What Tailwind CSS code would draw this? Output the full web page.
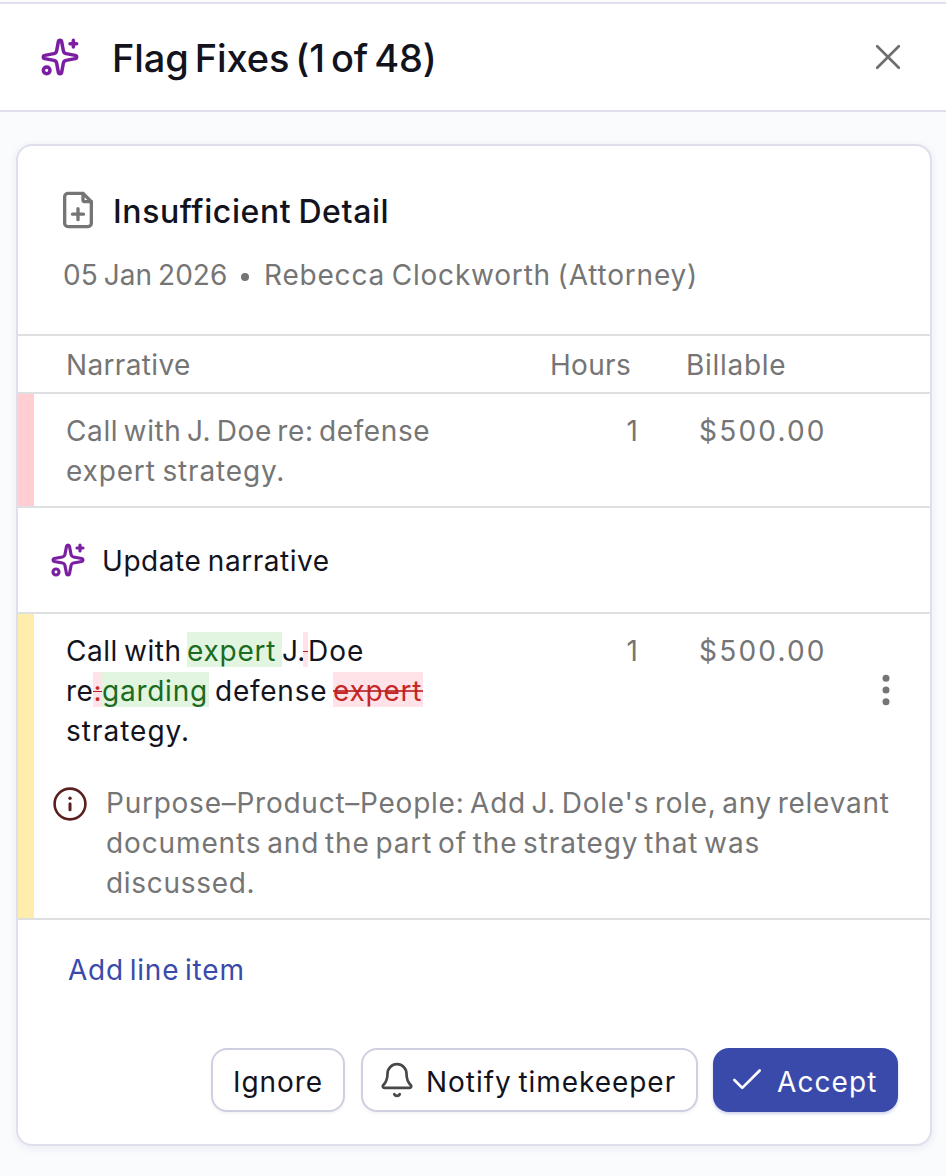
<!DOCTYPE html>
<html lang="en">
<head>
<meta charset="utf-8">
<title>Flag Fixes</title>
<script src="https://cdn.jsdelivr.net/npm/@tailwindcss/browser@4"></script>
</head>
<body class="w-[946px] h-[1176px] overflow-hidden bg-[#fafbfd] font-['Inter',sans-serif] text-[28px] leading-[40px] text-[#12131d]">
<svg class="hidden">
  <symbol id="sparkles" viewBox="0 0 24 24" fill="none" stroke="currentColor" stroke-width="2.1" stroke-linecap="round" stroke-linejoin="round">
    <path d="M11.017 2.814a1 1 0 0 1 1.966 0l1.051 5.558a2 2 0 0 0 1.594 1.594l5.558 1.051a1 1 0 0 1 0 1.966l-5.558 1.051a2 2 0 0 0-1.594 1.594l-1.051 5.558a1 1 0 0 1-1.966 0l-1.051-5.558a2 2 0 0 0-1.594-1.594l-5.558-1.051a1 1 0 0 1 0-1.966l5.558-1.051a2 2 0 0 0 1.594-1.594z"/>
    <path d="M20 2v4M22 4h-4"/><circle cx="4" cy="20" r="2"/>
  </symbol>
</svg>
<div class="flex h-full flex-col">
  <header class="mt-[2px] flex h-[110px] shrink-0 items-center border-y-2 border-[#dfdfee] bg-white pr-[45px] pl-[40px]">
    <svg class="size-[40px] text-[#7b1fa2]"><use href="#sparkles"/></svg>
    <h1 class="mt-[2px] ml-[32px] text-[38px] font-medium whitespace-nowrap tracking-[-0.1px] [word-spacing:-4px]">Flag Fixes (1 of 48)</h1>
    <svg class="ml-auto size-[26px] text-[#6e6e6e]" viewBox="0 0 26 26" fill="none" stroke="currentColor" stroke-width="2.7" stroke-linecap="round"><path d="M2.2 2.2l21.6 21.6M23.8 2.2L2.2 23.8"/></svg>
  </header>

  <main class="mt-[32px] ml-[16px] h-[1002px] w-[916px] shrink-0 overflow-hidden rounded-[16px] border-2 border-[#dfdfec] bg-white shadow-[0_2px_6px_2px_rgba(40,40,80,0.05)]">
    <section class="h-[188px] pt-[44px] pl-[45px]">
      <div class="flex items-center">
        <svg class="-mt-[2px] -ml-[5px] size-[40px] text-[#757575]" viewBox="0 0 24 24" fill="none" stroke="currentColor" stroke-width="2" stroke-linecap="round" stroke-linejoin="round">
          <path d="M6 22a2 2 0 0 1-2-2V4a2 2 0 0 1 2-2h9l5 5v13a2 2 0 0 1-2 2z"/><path d="M15 2v4a1 1 0 0 0 1 1h4M8.7 14.5h6.6M12 17.8v-6.6"/>
        </svg>
        <h2 class="mt-[2px] ml-[15px] text-[32px] font-medium whitespace-nowrap tracking-[0.6px] [word-spacing:-2px]">Insufficient Detail</h2>
      </div>
      <div class="mt-[23px] flex items-center whitespace-nowrap text-[#757575]">
        <span class="w-[178px] tracking-[0.05px] [word-spacing:-2px]">05 Jan 2026</span>
        <span class="mt-[3px] size-[8px] rounded-full bg-[#757575]"></span>
        <span class="ml-[15px] tracking-[0.8px] [word-spacing:-2px]">Rebecca Clockworth (Attorney)</span>
      </div>
    </section>

    <div class="flex h-[60px] items-center border-y-2 border-[#dedfe1] pt-[2px] pl-[48px] text-[#757575]">
      <span class="w-[484px] tracking-[0.35px]">Narrative</span>
      <span class="w-[136px] tracking-[0.3px]">Hours</span>
      <span class="tracking-[0.7px]">Billable</span>
    </div>

    <div class="flex h-[112px] border-l-[16px] border-[#ffcdd2] pt-[17px] pl-[32px] whitespace-nowrap text-[#757575]">
      <div class="w-[484px]"><span class="tracking-[0.6px] [word-spacing:-3px]">Call with J. Doe re: defense</span><br><span class="tracking-[0.85px] [word-spacing:-2px]">expert strategy.</span></div>
      <div class="w-[88px] text-right">1</div>
      <div class="ml-[61px] tracking-[2.2px]">$500.00</div>
    </div>

    <div class="flex h-[108px] items-center border-y-2 border-[#dedfe1] pl-[32px]">
      <svg class="size-[36px] text-[#7b1fa2]"><use href="#sparkles"/></svg>
      <span class="mt-[2px] ml-[16px] tracking-[0.55px] [word-spacing:-2px]">Update narrative</span>
    </div>

    <div class="h-[304px] border-l-[16px] border-[#ffedab] pt-[17px]">
      <div class="flex pl-[32px] whitespace-nowrap">
        <div class="w-[484px]">
          <div class="flex h-[40px] items-start"><span class="w-[121px] tracking-[0.5px] [word-spacing:-2px]">Call with</span><ins class="mt-[1px] h-[35px] w-[95px] bg-[#e2f5e1] leading-[38px] tracking-[0.75px] text-[#1b6b20] no-underline">expert </ins><span class="w-[21px] tracking-[0.3px]">J.</span><del class="relative mt-[1px] h-[35px] w-[5px] bg-[#ffe3e8] no-underline after:absolute after:top-[19px] after:left-0 after:h-px after:w-full after:bg-[#b71c1c]"></del><span class="tracking-[1px]">Doe</span></div>
          <div class="flex h-[40px] items-start"><span class="w-[27px] tracking-[0.3px]">re</span><del class="relative mt-[1px] h-[35px] w-[9px] bg-[#ffe3e8] text-center leading-[38px] text-[#c62828] no-underline after:absolute after:top-[19px] after:left-0 after:h-px after:w-full after:bg-[#b71c1c]">:</del><ins class="mt-[1px] h-[35px] w-[107px] bg-[#e2f5e1] leading-[38px] tracking-[0.75px] text-[#1b6b20] no-underline">garding</ins><span class="ml-[6px] w-[118px] tracking-[0.75px]">defense</span><del class="relative mt-[1px] h-[35px] w-[90px] bg-[#ffe3e8] leading-[38px] tracking-[0.75px] text-[#c62828] no-underline after:absolute after:top-[18px] after:left-0 after:h-[2px] after:w-full after:bg-[#b71c1c]/80">expert</del></div>
          <div class="tracking-[1px]">strategy.</div>
        </div>
        <div class="w-[88px] text-right text-[#757575]">1</div>
        <div class="ml-[61px] tracking-[2.2px] text-[#757575]">$500.00</div>
        <svg class="mt-[42px] ml-auto mr-[40px] h-[34px] w-[8px] fill-[#757575]" viewBox="0 0 8 34"><circle cx="4" cy="5.3" r="3.5"/><circle cx="4" cy="17" r="3.5"/><circle cx="4" cy="28.7" r="3.5"/></svg>
      </div>
      <div class="mt-[32px] flex pl-[18px] whitespace-nowrap text-[#757575]">
        <svg class="mt-[3px] size-[36px] text-[#5c1f1f]" viewBox="0 0 36 36" fill="none" stroke="currentColor" stroke-width="2.6" stroke-linecap="round"><circle cx="18" cy="18" r="15.4"/><path d="M18 17.8v6" stroke-width="3"/><circle cx="18" cy="12.3" r="1.7" fill="currentColor" stroke="none"/></svg>
        <p class="ml-[18px]"><span class="tracking-[0.75px] [word-spacing:-3px]">Purpose–Product–People: Add J. Dole's role, any relevant</span><br><span class="tracking-[0.88px] [word-spacing:-3px]">documents and the part of the strategy that was</span><br><span class="tracking-[0.7px]">discussed.</span></p>
      </div>
    </div>

    <div class="flex h-[102px] items-center border-t-2 border-[#dedfe1] pl-[50px] text-[#394aab]">
      <span class="tracking-[0.8px] [word-spacing:-3px]">Add line item</span>
    </div>

    <footer class="mt-[28px] flex h-[64px] justify-end pr-[32px] whitespace-nowrap">
      <button class="flex w-[134px] items-center justify-center rounded-[16px] border-2 border-[#cfcfe2] bg-white pt-[3px] tracking-[0.9px] shadow-[0_2px_3px_rgba(40,40,80,0.05)]">Ignore</button>
      <button class="ml-[16px] flex w-[337px] items-center rounded-[16px] border-2 border-[#cfcfe2] bg-white pl-[15px] shadow-[0_2px_3px_rgba(40,40,80,0.05)]">
        <svg class="size-[38px] text-[#484848]" viewBox="0 0 24 24" fill="none" stroke="currentColor" stroke-width="1.7" stroke-linecap="round" stroke-linejoin="round"><path d="M10.268 21a2 2 0 0 0 3.464 0M3.262 15.326A1 1 0 0 0 4 17h16a1 1 0 0 0 .74-1.673C19.41 13.956 18 12.499 18 8A6 6 0 0 0 6 8c0 4.499-1.411 5.956-2.738 7.326"/></svg>
        <span class="mt-[3px] ml-[10px] tracking-[0.95px] [word-spacing:-2px]">Notify timekeeper</span>
      </button>
      <button class="ml-[15px] flex w-[185px] items-center rounded-[16px] bg-[#394aab] pl-[15px] text-white shadow-[0_2px_3px_rgba(57,74,171,0.25)]">
        <svg class="size-[38px]" viewBox="0 0 24 24" fill="none" stroke="currentColor" stroke-width="1.7" stroke-linecap="round" stroke-linejoin="round"><path d="M20 6 9 17l-5-5"/></svg>
        <span class="mt-[3px] ml-[11px] tracking-[1.1px]">Accept</span>
      </button>
    </footer>
  </main>
</div>
</body>
</html>
